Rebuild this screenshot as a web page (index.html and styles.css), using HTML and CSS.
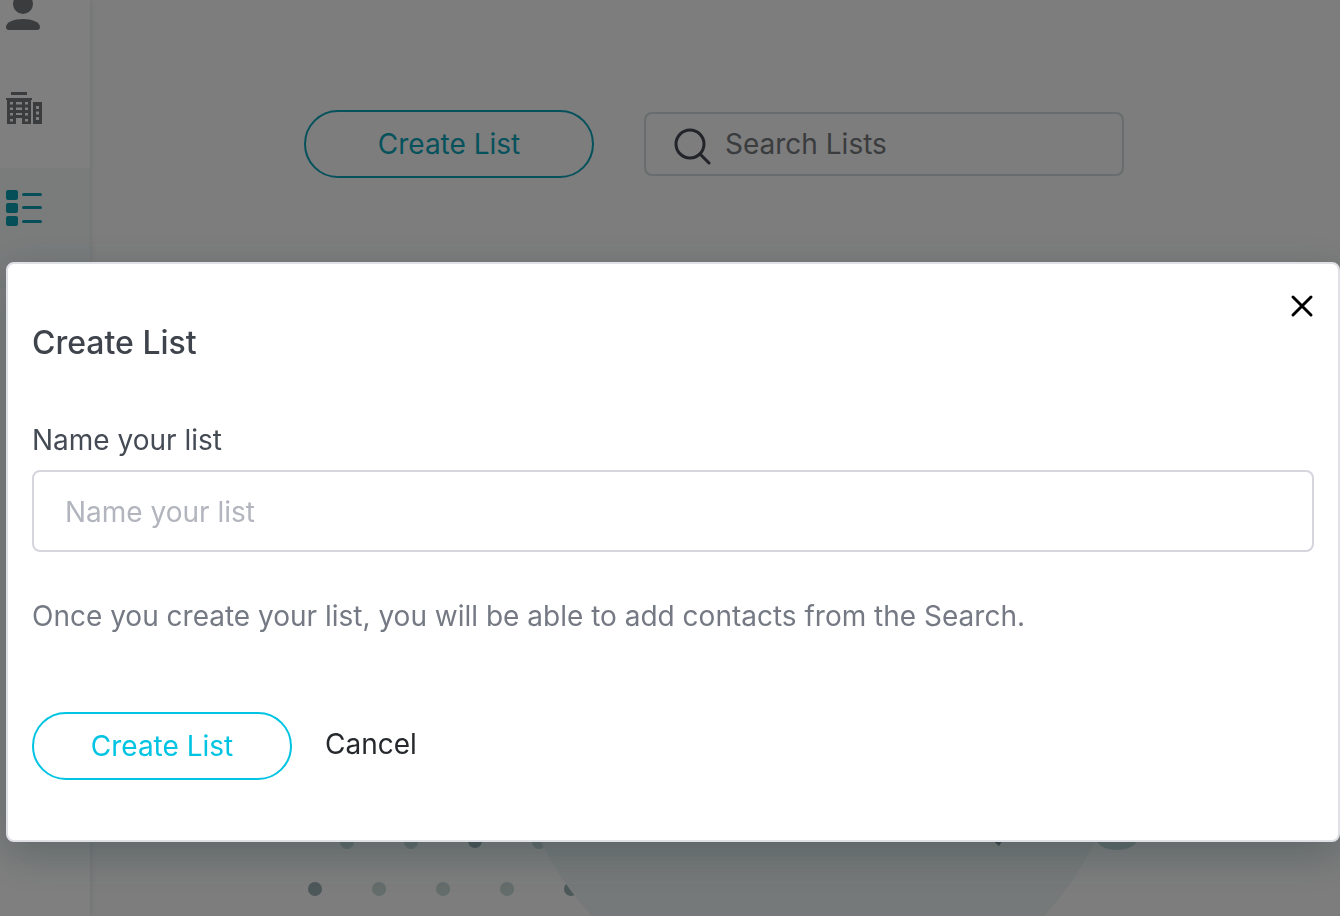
FILE: index.html
```html
<!DOCTYPE html>
<html lang="en">
<head>
<meta charset="utf-8">
<meta name="viewport" content="width=device-width, initial-scale=1">
<title>Create List</title>
<link rel="stylesheet" href="styles.css">
</head>
<body>
<div class="app">
  <nav class="sidebar" aria-label="Main">
    <a class="nav-item nav-item-first" href="#contacts" aria-label="Contacts">
      <svg class="nav-icon" viewBox="0 0 36 42" width="36" height="42" aria-hidden="true">
        <circle cx="17" cy="16" r="10"/>
        <path d="M0 39c0-5 8-8 17-8s17 3 17 8c0 2-1 3-3 3H3c-2 0-3-1-3-3z"/>
      </svg>
    </a>
    <a class="nav-item" href="#companies" aria-label="Companies">
      <svg class="nav-icon" viewBox="0 0 36 36" width="36" height="36" aria-hidden="true">
        <path d="M5 2h16v3H5zM0 8h26v2H0z"/>
        <path fill-rule="evenodd" d="M1 9h24v25h-9v-6h-6v6H1zM4 12v2.500h3v-2.500zm6 0v2.500h6v-2.500zm9 0v2.500h3v-2.500zM4 17.500v2.500h3v-2.500zm6 0v2.500h6v-2.500zm9 0v2.500h3v-2.500zM4 23v2.500h3v-2.500zm6 0v2h6v-2zm9 0v2.500h3v-2.500zM4 29v2.500h3v-2.500zm15 0v2.500h3v-2.500z"/>
        <path fill-rule="evenodd" d="M27 12h9v22h-9zM30 16v3h3v-3zm0 5.500v3h3v-3zm0 5.500v3h3v-3z"/>
      </svg>
    </a>
    <a class="nav-item nav-item-active" href="#lists" aria-label="Lists" aria-current="page">
      <svg class="nav-icon" viewBox="0 0 36 36" width="36" height="36" aria-hidden="true">
        <rect x="0" y="0" width="12" height="10" rx="2"/>
        <rect x="0" y="13" width="12" height="10" rx="2"/>
        <rect x="0" y="26" width="12" height="10" rx="2"/>
        <rect x="16" y="3" width="20" height="3" rx="1.5"/>
        <rect x="16" y="16" width="20" height="3" rx="1.5"/>
        <rect x="16" y="30" width="20" height="3" rx="1.5"/>
      </svg>
    </a>
  </nav>
  <main class="content">
    <div class="toolbar">
      <button class="btn-outline btn-wide" type="button">Create List</button>
      <label class="search">
        <svg class="search-icon" viewBox="0 0 38 38" width="38" height="38" aria-hidden="true">
          <circle cx="17" cy="17" r="14"/>
          <path d="M27 27l9 9"/>
        </svg>
        <input class="search-input" type="search" placeholder="Search Lists" aria-label="Search Lists">
      </label>
    </div>
    <svg class="illustration" viewBox="90 400 1250 516" preserveAspectRatio="xMidYMax slice" aria-hidden="true">
      <g class="dots">
        <circle cx="347" cy="842" r="7"/>
        <circle cx="411" cy="842" r="7"/>
        <circle class="dot-dark" cx="475" cy="841" r="7"/>
        <circle cx="539" cy="842" r="7"/>
        <circle class="dot-dark" cx="315" cy="889" r="7"/>
        <circle cx="379" cy="889" r="7"/>
        <circle cx="443" cy="889" r="7"/>
        <circle cx="507" cy="889" r="7"/>
        <circle class="dot-dark" cx="571" cy="889" r="7"/>
      </g>
      <circle class="disc" cx="818" cy="707" r="308"/>
      <ellipse class="blob" cx="1117" cy="836" rx="22" ry="14"/>
      <path class="tip" d="M990 838l14 0-5 8z"/>
    </svg>
  </main>
</div>
<div class="overlay">
  <form class="dialog" role="dialog" aria-modal="true" aria-labelledby="dialog-title">
    <header class="dialog-header">
      <h2 class="dialog-title" id="dialog-title">Create List</h2>
      <button class="close" type="button" aria-label="Close">
        <svg viewBox="0 0 24 24" width="24" height="24" aria-hidden="true"><path d="M3 3l18 18M21 3L3 21"/></svg>
      </button>
    </header>
    <label class="field-label" for="list-name">Name your list</label>
    <input class="field-input" id="list-name" type="text" placeholder="Name your list">
    <p class="hint">Once you create your list, you will be able to add contacts from the Search.</p>
    <div class="actions">
      <button class="btn-outline" type="button">Create List</button>
      <button class="btn-text" type="button">Cancel</button>
    </div>
  </form>
</div>
</body>
</html>
```
FILE: styles.css
```css
* {
  box-sizing: border-box;
}

body {
  margin: 0;
  background: #fafafa;
  color: #454b54;
  font: 28px/36px Inter, "Liberation Sans", sans-serif;
  overflow: hidden;
}

button,
input {
  font: inherit;
}

.app {
  display: flex;
  height: 100vh;
}

.sidebar {
  flex: none;
  display: flex;
  flex-direction: column;
  width: 90px;
  background: #fefefe;
  box-shadow: 0 0 6px rgba(0, 70, 80, 0.14);
}

.nav-item {
  display: flex;
  height: 100px;
  padding: 22px 6px;
  color: #76797d;
}

.nav-item-first {
  height: 68px;
  padding-top: 0;
}

.nav-item-first .nav-icon {
  margin-top: -12px;
}

.nav-item-active {
  height: 120px;
  background: #f5f9f9;
  color: #0c9fb3;
}

.nav-icon {
  fill: currentColor;
}

.content {
  flex: 1;
  min-width: 0;
  display: flex;
  flex-direction: column;
  justify-content: space-between;
}

.toolbar {
  display: flex;
  align-items: center;
  gap: 50px;
  padding: 110px 216px 0 214px;
}

.btn-outline {
  width: 260px;
  height: 68px;
  padding: 0;
  border: 2px solid #00c4e2;
  border-radius: 34px;
  background: transparent;
  color: #00c4e2;
}

.btn-wide {
  flex: none;
  width: 290px;
  border-color: #0ca4b8;
  color: #0ca4b8;
}

.search {
  flex: 1;
  display: flex;
  align-items: center;
  gap: 14px;
  height: 64px;
  padding: 0 27px;
  border: 2px solid #d0d9dc;
  border-radius: 8px;
}

.search-icon {
  flex: none;
  margin-top: 4px;
  fill: none;
  stroke: #454853;
  stroke-width: 3;
  stroke-linecap: round;
}

.search-input {
  width: 100%;
  min-width: 0;
  padding: 0;
  border: 0;
  outline: 0;
  background: transparent;
}

.search-input::placeholder {
  color: #74787d;
  opacity: 1;
}

.illustration {
  display: block;
  width: 100%;
}

.dots {
  fill: #c8d8d8;
}

.dot-dark {
  fill: #9bb0b5;
}

.disc {
  fill: #edf3f2;
}

.blob {
  fill: #c6d8d8;
}

.tip {
  fill: #7c8c94;
}

.overlay {
  position: fixed;
  inset: 0;
  padding: 262px 0 74px 6px;
  background: rgba(0, 0, 0, 0.5);
}

.dialog {
  display: flex;
  flex-direction: column;
  padding: 24px 24px 60px;
  border: 2px solid #dfe0e6;
  border-radius: 8px;
  background: #fff;
  box-shadow: 0 12px 40px rgba(20, 50, 54, 0.3);
}

.dialog-header {
  display: flex;
  justify-content: space-between;
  align-items: flex-start;
}

.dialog-title {
  margin: 35px 0 0;
  color: #3f444c;
  font-size: 32px;
  line-height: 40px;
  font-weight: 500;
}

.close {
  display: flex;
  padding: 6px 0;
  border: 0;
  background: transparent;
}

.close svg {
  fill: none;
  stroke: #000;
  stroke-width: 3;
  stroke-linecap: round;
}

.field-label {
  margin-top: 59px;
}

.field-input {
  height: 82px;
  margin-top: 12px;
  padding: 2px 31px 0;
  border: 2px solid #d5d6dd;
  border-radius: 8px;
  outline: 0;
  background: #fff;
}

.field-input::placeholder {
  color: #b3b5be;
  opacity: 1;
}

.hint {
  margin: 46px 0 0;
  color: #747983;
}

.actions {
  display: flex;
  align-items: center;
  gap: 33px;
  margin-top: 78px;
}

.btn-text {
  padding: 0 0 4px;
  border: 0;
  background: transparent;
  color: #25282c;
}
```
